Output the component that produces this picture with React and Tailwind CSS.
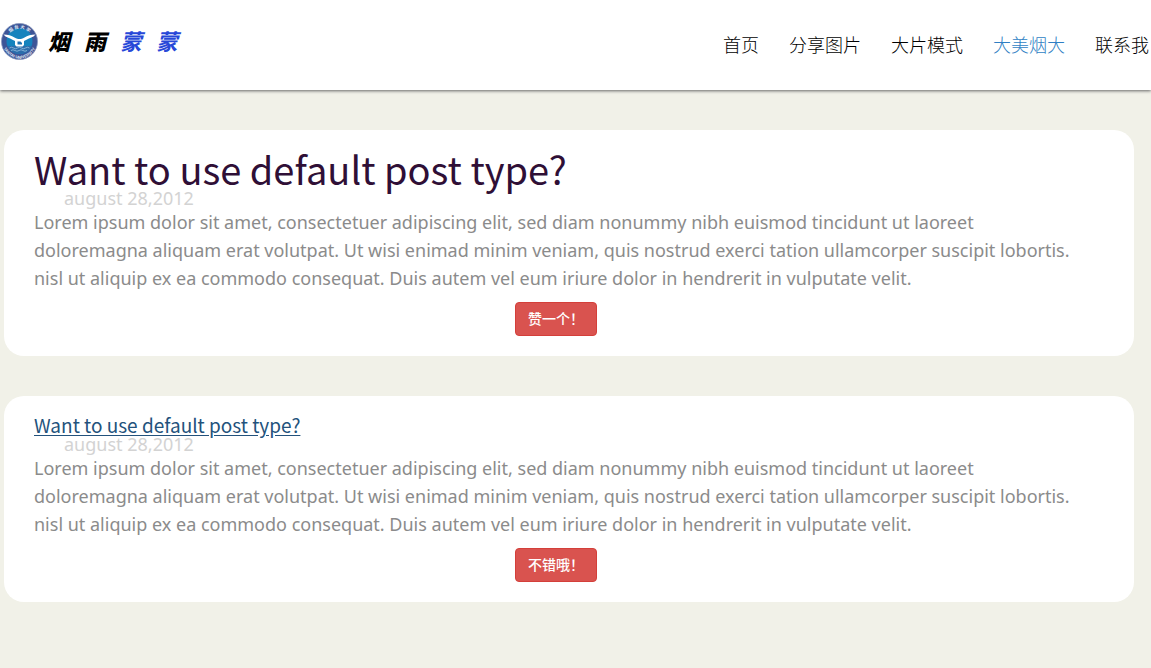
const NAV_ITEMS = [
  { label: "首页" },
  { label: "分享图片" },
  { label: "大片模式" },
  { label: "大美烟大", active: true },
  { label: "联系我" },
];

const LINES = [
  "Lorem ipsum dolor sit amet, consectetuer adipiscing elit, sed diam nonummy nibh euismod tincidunt ut laoreet",
  "doloremagna aliquam erat volutpat. Ut wisi enimad minim veniam, quis nostrud exerci tation ullamcorper suscipit lobortis.",
  "nisl ut aliquip ex ea commodo consequat. Duis autem vel eum iriure dolor in hendrerit in vulputate velit.",
];

function Emblem() {
  return (
    <svg viewBox="0 0 74 74" className="size-[37px] shrink-0" aria-hidden="true">
      <defs>
        <path id="ring-top" d="M11 37a26 26 0 0 1 52 0" />
        <path id="ring-bottom" d="M3 37a34 34 0 0 0 68 0" />
      </defs>
      <circle cx="37" cy="37" r="36" fill="#3d5597" stroke="#8594bb" strokeWidth="1.5" />
      <circle cx="37" cy="36" r="26" fill="#1583bd" />
      <path d="M13 46h48a26 26 0 0 1-48 0z" fill="#2c6dab" />
      <path
        d="M17 50q4-3 8 0t8 0 8 0 8 0 8 0M20 55q4-3 8 0t8 0 8 0 8 0"
        fill="none"
        stroke="#9fc6e2"
        strokeWidth="1.5"
      />
      <path
        d="M5 23c9 0 16 2 22 6 4 2 7 3 10 3s6-1 10-3c6-4 13-6 22-6l-4 4c-6 2-12 6-19 9v8l-3 3H31l-3-3v-8c-7-3-13-7-19-9z"
        fill="#fff"
      />
      <path d="M33 37h6l3 3v3h-9z" fill="#1d73b2" />
      <text fill="#dfe5f3" fontSize="9" fontWeight="700" className="font-['Noto_Sans_CJK_SC',sans-serif]">
        <textPath href="#ring-top" startOffset="50%" textAnchor="middle">烟 台 大 学</textPath>
      </text>
      <text fill="#e6ebf6" fontSize="8" fontWeight="700" className="font-['Liberation_Sans',sans-serif]">
        <textPath href="#ring-bottom" startOffset="50%" textAnchor="middle">YANTAI UNIVERSITY</textPath>
      </text>
    </svg>
  );
}

function Post({ title, large, action }) {
  return (
    <article className="rounded-[20px] bg-white py-5 pl-[30px] text-lg">
      <h2 className="font-['Noto_Sans_CJK_SC',sans-serif]">
        {large ? (
          <a href="#post" className="block text-[38px]/[38px] text-[#2f0f36]">{title}</a>
        ) : (
          <a href="#post" className="block text-[19px]/[18px] text-[#23527c] underline underline-offset-2">
            {title}
          </a>
        )}
      </h2>
      <p className="pl-[30px] leading-5 text-[#d3d3d3]">august 28,2012</p>
      <p className="leading-7 text-[#8b8b8b]">
        {LINES.map((line) => (
          <span key={line} className="block">{line}</span>
        ))}
      </p>
      <div className="mt-2.5 flex justify-center pr-14">
        <button
          type="button"
          className="rounded border border-[#d43f3a] bg-[#d9534f] px-3 py-1.5 text-sm/5 font-medium text-white"
        >
          {action}
        </button>
      </div>
    </article>
  );
}

export default function App() {
  return (
    <div className="min-h-screen bg-[#f1f1e8] font-['Noto_Sans','Noto_Sans_CJK_SC',sans-serif]">
      <header className="flex h-[90px] items-center justify-between bg-white pr-0.5 shadow-[0_1px_3px_#666]">
        <a href="#home" className="flex items-center gap-2.5 pb-2 pl-px">
          <Emblem />
          <span className="flex gap-3.5 text-[22px]/9 font-black text-black italic">
            <span>烟</span>
            <span>雨</span>
            <span className="font-bold text-[#2748d8]">蒙</span>
            <span className="font-bold text-[#2748d8]">蒙</span>
          </span>
        </a>
        <nav className="flex gap-[30px] text-lg font-light">
          {NAV_ITEMS.map(({ label, active }) => (
            <a key={label} href="#nav" className={active ? "text-[#2f7fc4]" : "text-black"}>
              {label}
            </a>
          ))}
        </nav>
      </header>
      <main className="flex flex-col gap-10 pt-10 pr-[17px] pb-10 pl-1">
        <Post title="Want to use default post type?" large action="赞一个！" />
        <Post title="Want to use default post type?" action="不错哦！" />
      </main>
    </div>
  );
}
